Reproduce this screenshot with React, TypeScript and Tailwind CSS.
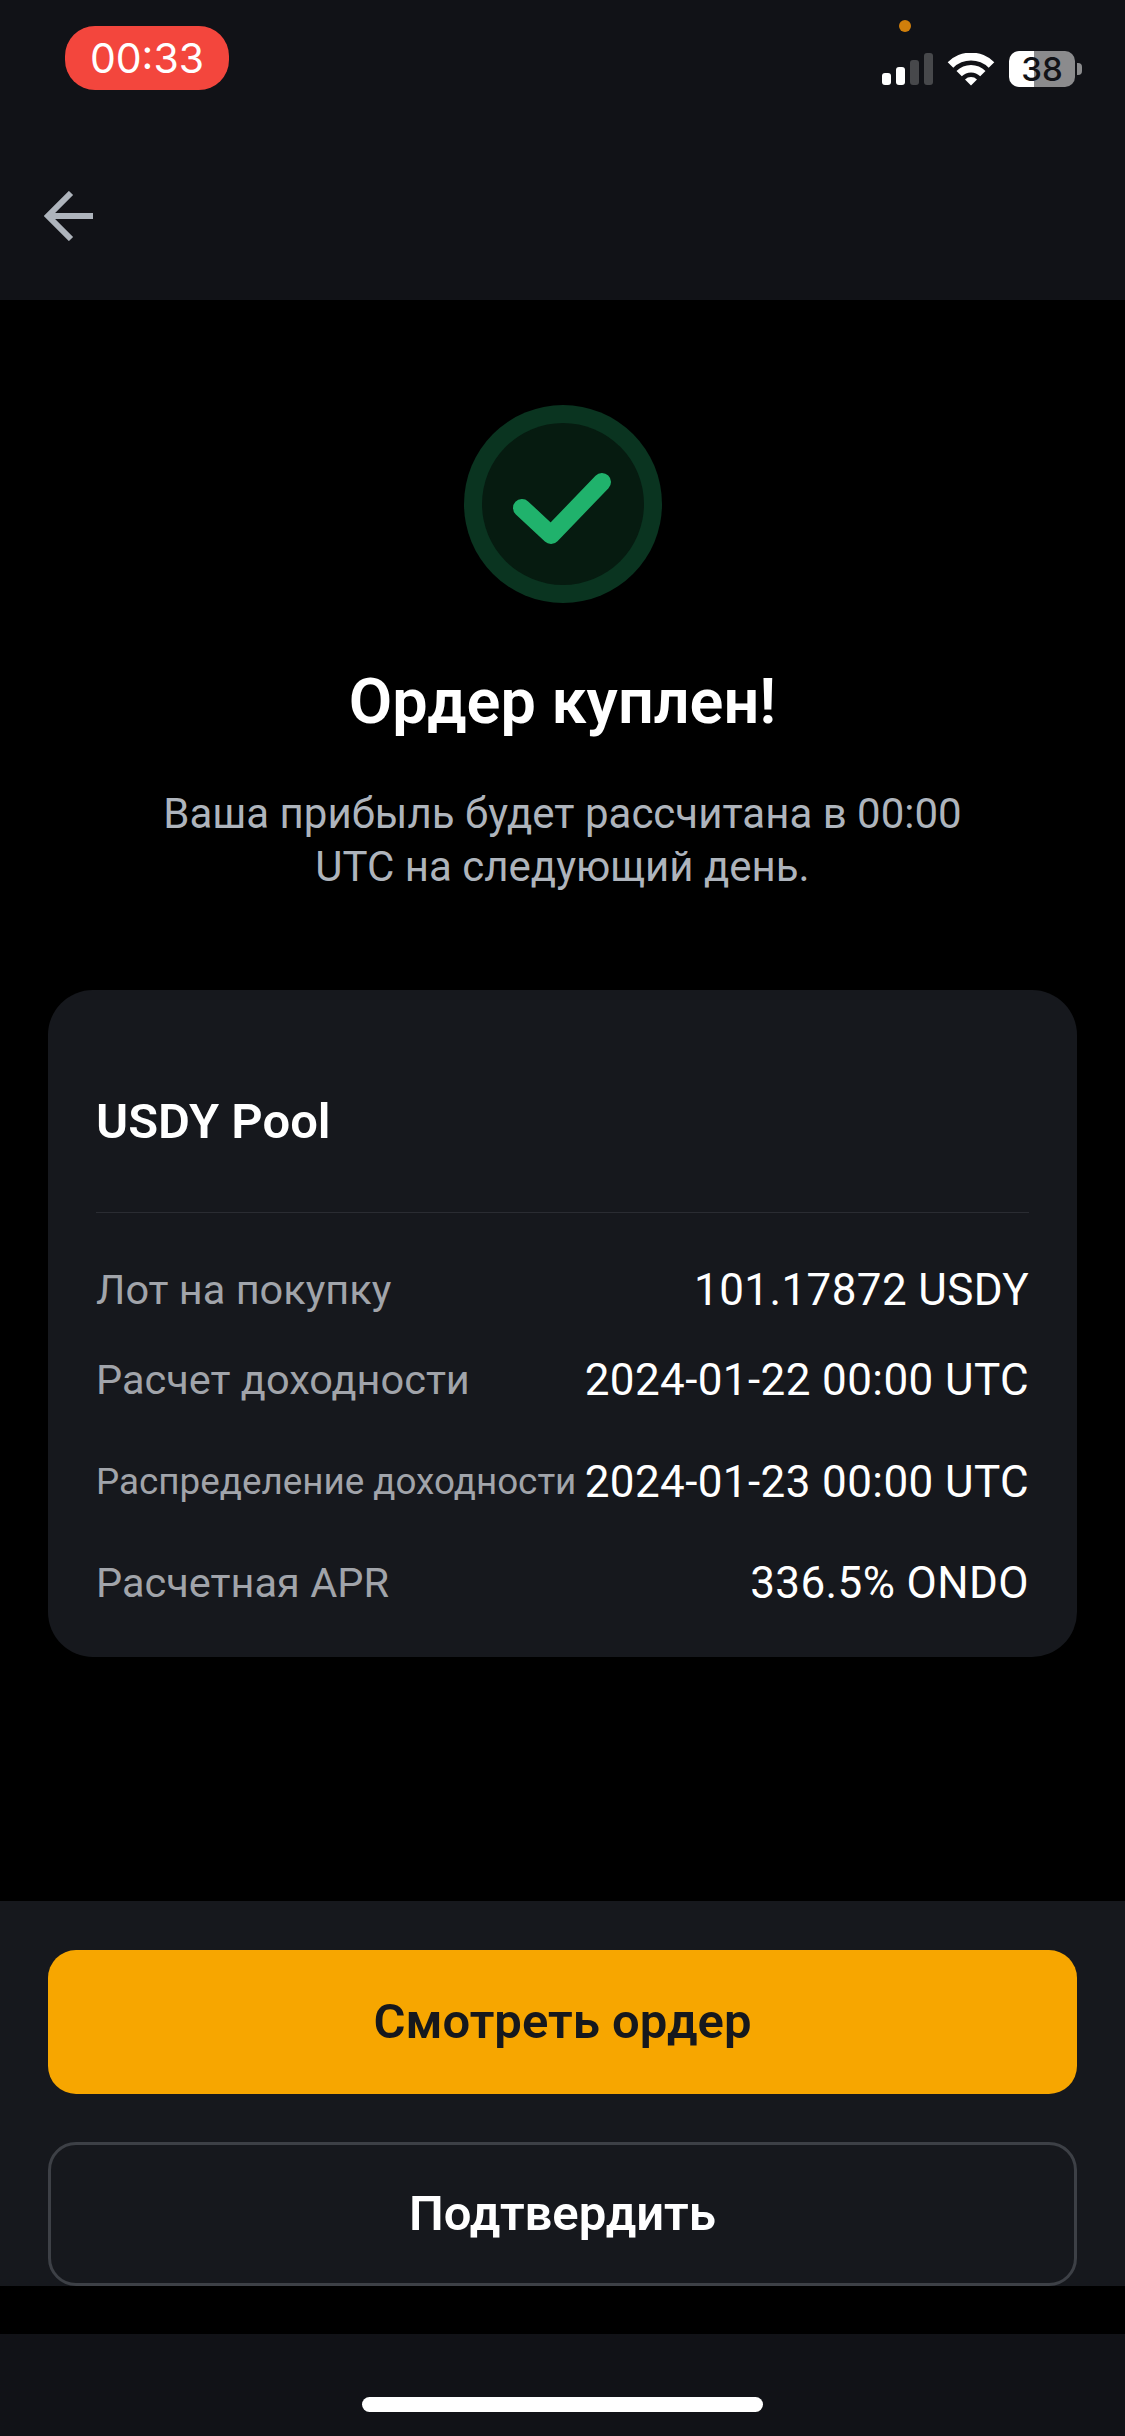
const rows = [
  { label: 'Лот на покупку', value: '101.17872 USDY', small: false, gap: 'mt-0' },
  { label: 'Расчет доходности', value: '2024-01-22 00:00 UTC', small: false, gap: 'mt-[30px]' },
  { label: 'Распределение доходности', value: '2024-01-23 00:00 UTC', small: true, gap: 'mt-[42px]' },
  { label: 'Расчетная APR', value: '336.5% ONDO', small: false, gap: 'mt-[41px]' },
]

const StatusIcons = () => (
  <div className="flex items-center mt-[51px] mr-[43px]">
    {/* signal */}
    <div className="flex items-end gap-[5px] h-[32px]">
      <div className="w-[9px] h-[12px] rounded-[3px] bg-white" />
      <div className="w-[9px] h-[18px] rounded-[3px] bg-white" />
      <div className="w-[9px] h-[25px] rounded-[3px] bg-[#47484b]" />
      <div className="w-[9px] h-[32px] rounded-[3px] bg-[#47484b]" />
    </div>
    {/* wifi */}
    <svg width="48" height="33" viewBox="-1 0 48 33" className="ml-[14px]">
      <path d="M-0.3 9.2 A33 33 0 0 1 46.3 9.2 L40.7 14.8 A25 25 0 0 0 5.3 14.8 Z" fill="#fff" />
      <path d="M8.5 18 A20.5 20.5 0 0 1 37.5 18 L32.2 23.3 A13 13 0 0 0 13.8 23.3 Z" fill="#fff" />
      <path d="M17 26.5 A8.5 8.5 0 0 1 29 26.5 L23 32.5 Z" fill="#fff" />
    </svg>
    {/* battery */}
    <div className="ml-[14px] w-[66px] h-[36px] rounded-[10px] bg-[linear-gradient(90deg,#ffffff_38%,#8b8b8d_38%)] flex items-center justify-center font-['Inter',sans-serif] font-medium text-[33px] leading-none text-[#111217]">
      38
    </div>
    <div className="ml-[2px] w-[5px] h-[12px] rounded-r-[4px] bg-[#8b8b8d]" />
  </div>
)

export default function App() {
  return (
    <div className="w-[1125px] h-[2436px] bg-black flex flex-col overflow-hidden font-['Roboto',sans-serif]">
      <header className="relative h-[300px] bg-[#111217] shrink-0">
        <div className="flex justify-between items-start">
          <div className="ml-[65px] mt-[26px] w-[164px] h-[64px] rounded-[30px] bg-[#f3463d] flex items-center justify-center font-['Inter',sans-serif] text-[41px] leading-none text-white">
            00:33
          </div>
          <StatusIcons />
        </div>
        <div className="absolute left-[899px] top-[20px] w-[12px] h-[12px] rounded-full bg-[#d17f0b]" />
        <svg width="49" height="50" viewBox="0 0 49 50" className="ml-[44px] mt-[101px]" fill="none" stroke="#aeb4bc" strokeWidth="6">
          <path d="M27 2 L4 25 L27 48" />
          <path d="M4 25 H49" />
        </svg>
      </header>

      <main className="flex-1 flex flex-col items-center px-[48px]">
        <svg width="198" height="198" viewBox="0 0 198 198" className="mt-[105px] shrink-0">
          <circle cx="99" cy="99" r="99" fill="#0a3420" />
          <circle cx="99" cy="99" r="81" fill="#061b10" />
          <path d="M58 103 L87 130 L138 77" fill="none" stroke="#20b26c" strokeWidth="18" strokeLinecap="round" strokeLinejoin="round" />
        </svg>
        <h1 className="mt-[67px] text-[63px] leading-[64px] font-semibold text-white">Ордер куплен!</h1>
        <p className="mt-[53px] text-[42px] leading-[53px] text-[#aeb4bc] text-center">
          Ваша прибыль будет рассчитана в 00:00
          <br />
          UTC на следующий день.
        </p>

        <section className="mt-[97px] w-full rounded-[45px] bg-[#16181d] px-[48px] pt-[100px] pb-[44px]">
          <h2 className="text-[49px] leading-[64px] font-semibold text-white">USDY Pool</h2>
          <div className="mt-[58px] h-px bg-[#2a2c32]" />
          <div className="mt-[47px]">
            {rows.map((row) => (
              <div key={row.label} className={`flex justify-between items-center h-[60px] ${row.gap}`}>
                <span className={row.small ? 'text-[36.8px] text-[#a1a4aa]' : 'text-[41.5px] text-[#a1a4aa]'}>{row.label}</span>
                <span className="text-[44px] tracking-[0.4px] text-white">{row.value}</span>
              </div>
            ))}
          </div>
        </section>
      </main>

      <footer className="h-[385px] shrink-0 bg-[#16181d] px-[48px] pt-[49px] flex flex-col gap-[48px]">
        <button className="h-[144px] rounded-[28px] bg-[#f7a600] text-[49px] font-semibold text-[#16181d]">Смотреть ордер</button>
        <button className="h-[144px] rounded-[28px] border-[3px] border-[#3d4046] text-[49px] font-semibold text-white">Подтвердить</button>
      </footer>

      <div className="mt-[48px] h-[102px] shrink-0 bg-[#111217] pt-[63px] flex justify-center">
        <div className="w-[401px] h-[15px] rounded-full bg-white" />
      </div>
    </div>
  )
}
